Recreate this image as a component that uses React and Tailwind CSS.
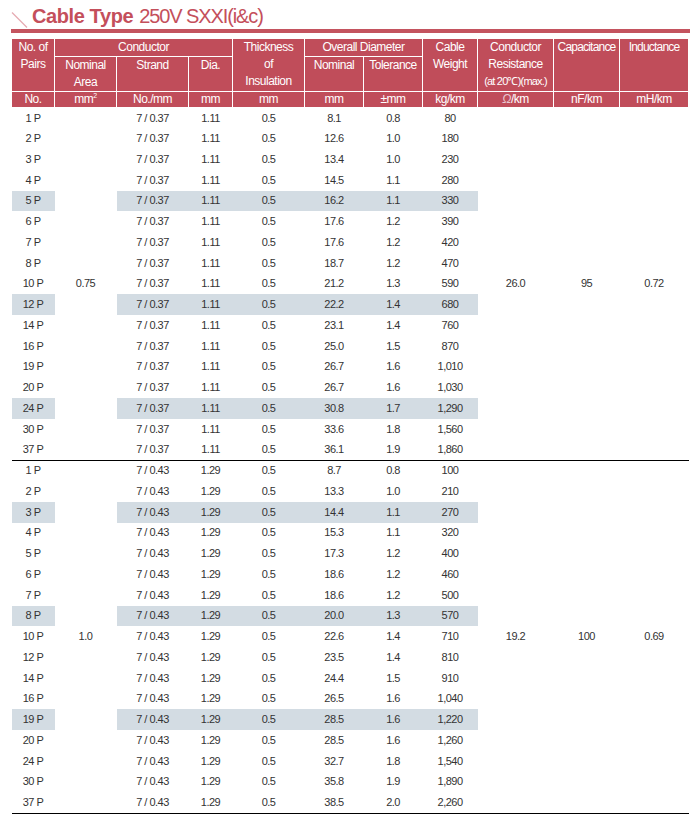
import React from 'react';

const block1 = [
  ['1 P', '8.1', '0.8', '80'],
  ['2 P', '12.6', '1.0', '180'],
  ['3 P', '13.4', '1.0', '230'],
  ['4 P', '14.5', '1.1', '280'],
  ['5 P', '16.2', '1.1', '330', true],
  ['6 P', '17.6', '1.2', '390'],
  ['7 P', '17.6', '1.2', '420'],
  ['8 P', '18.7', '1.2', '470'],
  ['10 P', '21.2', '1.3', '590'],
  ['12 P', '22.2', '1.4', '680', true],
  ['14 P', '23.1', '1.4', '760'],
  ['16 P', '25.0', '1.5', '870'],
  ['19 P', '26.7', '1.6', '1,010'],
  ['20 P', '26.7', '1.6', '1,030'],
  ['24 P', '30.8', '1.7', '1,290', true],
  ['30 P', '33.6', '1.8', '1,560'],
  ['37 P', '36.1', '1.9', '1,860'],
];

const block2 = [
  ['1 P', '8.7', '0.8', '100'],
  ['2 P', '13.3', '1.0', '210'],
  ['3 P', '14.4', '1.1', '270', true],
  ['4 P', '15.3', '1.1', '320'],
  ['5 P', '17.3', '1.2', '400'],
  ['6 P', '18.6', '1.2', '460'],
  ['7 P', '18.6', '1.2', '500'],
  ['8 P', '20.0', '1.3', '570', true],
  ['10 P', '22.6', '1.4', '710'],
  ['12 P', '23.5', '1.4', '810'],
  ['14 P', '24.4', '1.5', '910'],
  ['16 P', '26.5', '1.6', '1,040'],
  ['19 P', '28.5', '1.6', '1,220', true],
  ['20 P', '28.5', '1.6', '1,260'],
  ['24 P', '32.7', '1.8', '1,540'],
  ['30 P', '35.8', '1.9', '1,890'],
  ['37 P', '38.5', '2.0', '2,260'],
];

const Block = ({ rows, area, strand, dia, res, cap, ind }) => (
  <tbody className="text-[11px] leading-[13px] text-[#333] tracking-[-0.5px]">
    {rows.map((r, i) => {
      const bg = r[4] ? 'bg-[#d3dce3]' : '';
      const last = i === rows.length - 1;
      return (
        <tr key={r[0]} className={last ? 'h-[20.75px] border-b border-black' : 'h-[20.75px]'}>
          <td className={bg}>{r[0]}</td>
          {i === 0 && (
            <td rowSpan={17} className="align-middle">
              {area}
            </td>
          )}
          <td className={bg}>{strand}</td>
          <td className={bg}>{dia}</td>
          <td className={bg}>0.5</td>
          <td className={bg}>{r[1]}</td>
          <td className={bg}>{r[2]}</td>
          <td className={bg}>{r[3]}</td>
          {i === 0 && (
            <>
              <td rowSpan={17} className="align-middle border-b border-black">
                {res}
              </td>
              <td rowSpan={17} className="align-middle border-b border-black">
                {cap}
              </td>
              <td rowSpan={17} className="align-middle border-b border-black">
                {ind}
              </td>
            </>
          )}
        </tr>
      );
    })}
  </tbody>
);

const App = () => {
  const th = 'border border-white align-top font-normal p-0 leading-[17px]';
  const unit = 'border border-white align-top font-normal p-0 leading-[15px]';
  return (
    <div className="w-[690px] h-[828px] bg-white font-['Liberation_Sans',Arial,sans-serif]">
      <div className="pl-[11px] pt-[5px]">
        <div className="flex items-end h-[23px] text-[#c44f5b]">
          <svg width="17" height="17" viewBox="0 0 17 17" className="mr-[4px]">
            <line x1="1" y1="1.5" x2="16" y2="16.5" stroke="#e6aab2" strokeWidth="1.2" />
          </svg>
          <span className="text-[20px] leading-[23px] font-bold tracking-[-0.4px]">Cable Type</span>
          <span className="text-[20px] leading-[23px] tracking-[-1.1px] ml-[6px]">250V SXXI(i&amp;c)</span>
        </div>
        <div className="h-[4px] bg-[#c4545f] mt-[1px]" />
      </div>

      <div className="pl-[11px] pt-[5px]">
        <table className="table-fixed border-collapse w-[677px] text-center">
          <colgroup>
            <col className="w-[43px]" />
            <col className="w-[62px]" />
            <col className="w-[72px]" />
            <col className="w-[44px]" />
            <col className="w-[72px]" />
            <col className="w-[59px]" />
            <col className="w-[59px]" />
            <col className="w-[55px]" />
            <col className="w-[76px]" />
            <col className="w-[66px]" />
            <col className="w-[69px]" />
          </colgroup>
          <thead className="bg-[#c04d5a] text-white text-[12px] tracking-[-0.5px]">
            <tr className="h-[16px]">
              <th rowSpan={2} className={th}>
                No. of
                <br />
                Pairs
              </th>
              <th colSpan={3} className={th}>
                Conductor
              </th>
              <th rowSpan={2} className={th}>
                Thickness
                <br />
                of
                <br />
                Insulation
              </th>
              <th colSpan={2} className={th}>
                Overall Diameter
              </th>
              <th rowSpan={2} className={th}>
                Cable
                <br />
                Weight
              </th>
              <th rowSpan={2} className={th}>
                Conductor
                <br />
                Resistance
                <br />
                <span className="text-[11px] tracking-[-0.8px]">(at 20℃)(max.)</span>
              </th>
              <th rowSpan={2} className={th + ' tracking-[-0.8px]'}>
                Capacitance
              </th>
              <th rowSpan={2} className={th + ' tracking-[-0.8px]'}>
                Inductance
              </th>
            </tr>
            <tr className="h-[35px]">
              <th className={th}>
                Nominal
                <br />
                Area
              </th>
              <th className={th}>Strand</th>
              <th className={th}>Dia.</th>
              <th className={th}>Nominal</th>
              <th className={th}>Tolerance</th>
            </tr>
            <tr className="h-[15px]">
              <th className={unit}>No.</th>
              <th className={unit}>
                mm<sup className="text-[7px] -top-[5px]">2</sup>
              </th>
              <th className={unit}>No./mm</th>
              <th className={unit}>mm</th>
              <th className={unit}>mm</th>
              <th className={unit}>mm</th>
              <th className={unit}>±mm</th>
              <th className={unit}>kg/km</th>
              <th className={unit}>
                <span className="italic text-[#e8c8d0]">Ω</span>/km
              </th>
              <th className={unit}>nF/km</th>
              <th className={unit}>mH/km</th>
            </tr>
          </thead>
          <Block rows={block1} area="0.75" strand="7 / 0.37" dia="1.11" res="26.0" cap="95" ind="0.72" />
          <Block rows={block2} area="1.0" strand="7 / 0.43" dia="1.29" res="19.2" cap="100" ind="0.69" />
        </table>
      </div>
    </div>
  );
};

export default App;
